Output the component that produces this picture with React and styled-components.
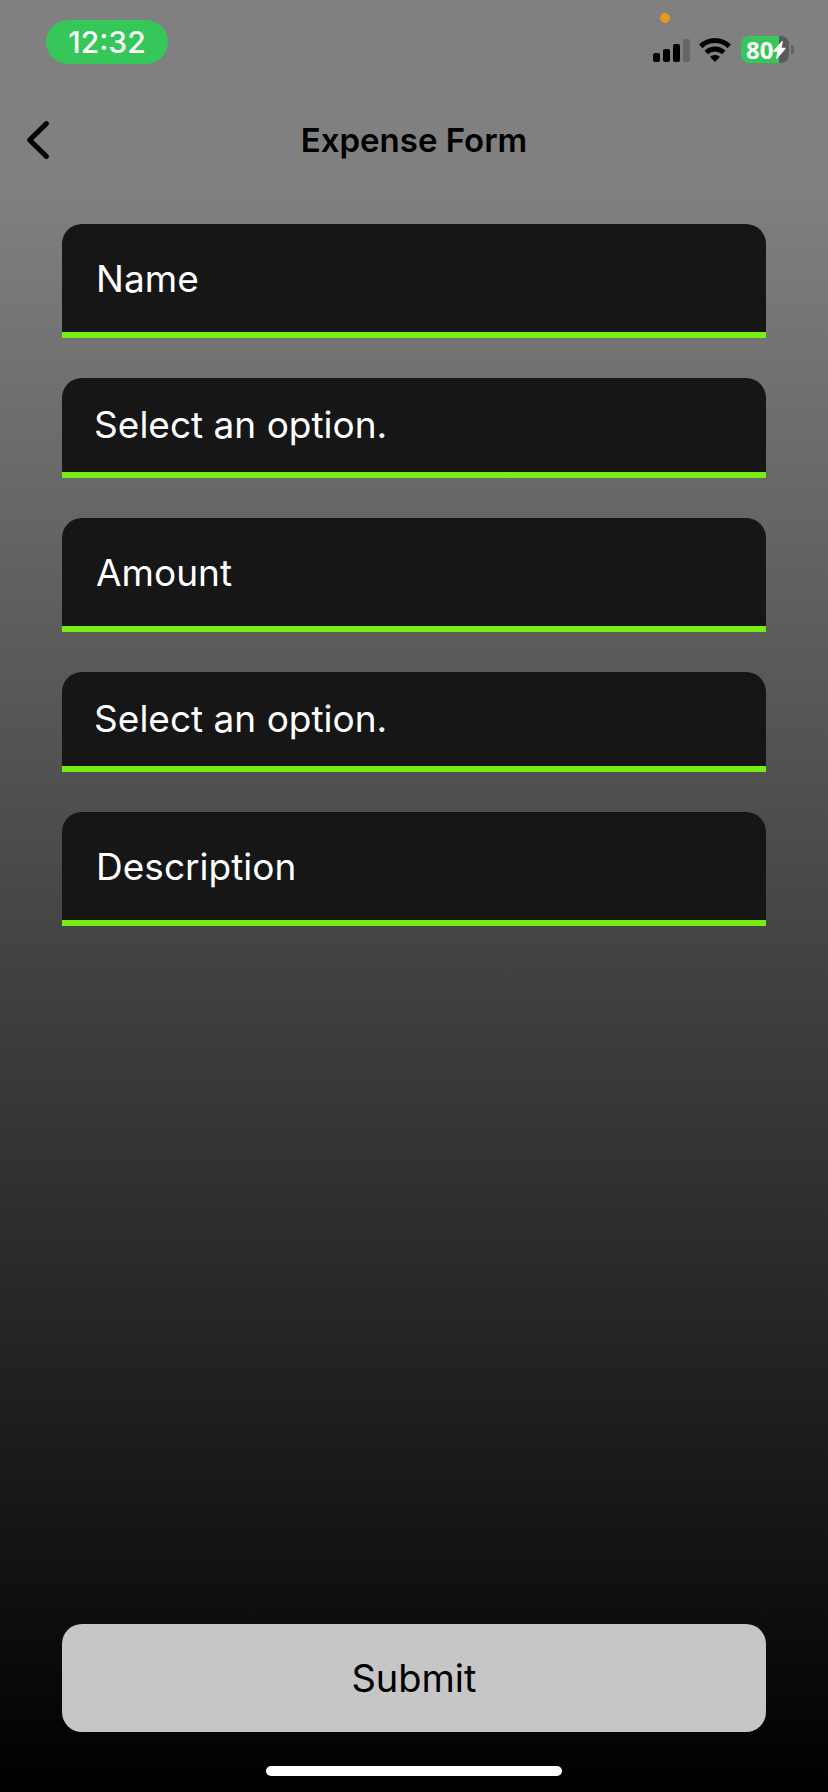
import React from "react";
import styled, { createGlobalStyle } from "styled-components";

const GlobalStyle = createGlobalStyle`
  *, *::before, *::after { box-sizing: border-box; }
  body {
    margin: 0;
    background: #000;
    font-family: Inter, "Liberation Sans", sans-serif;
  }
`;

const Screen = styled.div`
  display: flex;
  flex-direction: column;
  min-height: 100vh;
  background: linear-gradient(to bottom, #808080 184px, #000 100%);
`;

const StatusBar = styled.div`
  display: flex;
  justify-content: space-between;
  align-items: flex-start;
  height: 96px;
  padding: 20px 34px 0 46px;
`;

const TimePill = styled.time`
  display: flex;
  align-items: center;
  justify-content: center;
  width: 122px;
  height: 44px;
  border-radius: 22px;
  background: #35c759;
  color: #fff;
  font-size: 30px;
  font-weight: 500;
  line-height: 44px;
`;

const Indicators = styled.div`
  position: relative;
  display: flex;
  align-items: center;
  padding-top: 16px;
`;

const RecordingDot = styled.span`
  position: absolute;
  top: -7px;
  left: 7px;
  width: 10px;
  height: 10px;
  border-radius: 50%;
  background: #e6981f;
`;

const SignalIcon = styled.svg`
  width: 37px;
  height: 24px;
  margin-right: 9px;
`;

const WifiIcon = styled.svg`
  width: 32px;
  height: 24px;
  margin-right: 10px;
`;

const Battery = styled.div`
  display: flex;
  align-items: center;
  width: 48px;
  height: 27px;
  padding-left: 5px;
  border-radius: 8px;
  background: linear-gradient(to right, #35c759 38px, #5a5a5a 38px);
  color: #fff;
  font-family: "Noto Sans", sans-serif;
  font-size: 24px;
  font-weight: 700;
  line-height: 27px;
`;

const BoltIcon = styled.svg`
  flex: none;
  width: 13px;
  height: 18px;
`;

const BatteryCap = styled.span`
  width: 3px;
  height: 9px;
  margin-left: 2px;
  border-radius: 0 3px 3px 0;
  background: #626262;
`;

const Header = styled.header`
  display: grid;
  grid-template-columns: 80px 1fr 80px;
  align-items: center;
  height: 88px;
`;

const BackButton = styled.button`
  display: flex;
  align-items: center;
  height: 88px;
  padding: 0 0 0 26px;
  border: 0;
  background: none;
  cursor: pointer;
`;

const BackIcon = styled.svg`
  width: 24px;
  height: 40px;
`;

const Title = styled.h1`
  margin: 0;
  color: #000;
  font-size: 33px;
  font-weight: 600;
  line-height: 40px;
  text-align: center;
`;

const Form = styled.form`
  display: flex;
  flex: 1;
  flex-direction: column;
  gap: 40px;
  width: 85%;
  margin: 0 auto;
  padding: 40px 0 34px;
`;

const fieldStyles = `
  display: block;
  width: 100%;
  margin: 0;
  border: 0;
  border-bottom: 6px solid #76ee15;
  border-radius: 0;
  background: none;
  color: #fff;
  font-family: inherit;
  font-size: 37px;
  line-height: 48px;
  outline: none;
`;

const Field = styled.div`
  overflow: hidden;
  border-radius: 20px 20px 0 0;
  background: #161616;
`;

const TextInput = styled.input`
  ${fieldStyles}
  height: 114px;
  padding: 0 34px;

  &::placeholder {
    color: #fff;
    opacity: 1;
  }
`;

const SelectInput = styled.select`
  ${fieldStyles}
  height: 100px;
  padding: 0 32px;
  appearance: none;
`;

const SubmitButton = styled.button`
  height: 108px;
  margin-top: auto;
  border: 0;
  border-radius: 20px;
  background: #c6c6c6;
  color: #000;
  font-family: inherit;
  font-size: 38px;
  line-height: 48px;
  cursor: pointer;
`;

const HomeIndicator = styled.div`
  width: 296px;
  height: 10px;
  margin: 0 auto 16px;
  border-radius: 5px;
  background: #fff;
`;

const fields = [
  { id: "name", label: "Name", type: "text" },
  { id: "category", label: "Category", type: "select" },
  { id: "amount", label: "Amount", type: "text" },
  { id: "account", label: "Account", type: "select" },
  { id: "description", label: "Description", type: "text" },
];

function FormField({ id, label, type }) {
  return (
    <Field>
      {type === "select" ? (
        <SelectInput id={id} name={id} aria-label={label} defaultValue="">
          <option value="">Select an option.</option>
        </SelectInput>
      ) : (
        <TextInput id={id} name={id} type="text" aria-label={label} placeholder={label} />
      )}
    </Field>
  );
}

export default function App() {
  return (
    <>
      <GlobalStyle />
      <Screen>
        <StatusBar>
          <TimePill>12:32</TimePill>
          <Indicators>
            <RecordingDot />
            <SignalIcon viewBox="0 0 37 24" aria-hidden="true">
              <rect x="0" y="15" width="7" height="9" rx="2" />
              <rect x="10" y="11" width="7" height="13" rx="2" />
              <rect x="20" y="6" width="7" height="18" rx="2" />
              <rect x="30" y="1" width="7" height="23" rx="2" fill="#666" />
            </SignalIcon>
            <WifiIcon viewBox="0 0 32 24" aria-hidden="true">
              <g fill="none" stroke="#000" strokeWidth="5">
                <path d="M1.8 8.4A20.2 20.2 0 0 1 30.2 8.4" />
                <path d="M7.2 14.6A12.4 12.4 0 0 1 24.8 14.6" />
              </g>
              <path d="M16 24L11.3 19.3Q11.3 18.3 12.2 17.9Q16 15.9 19.8 17.9Q20.7 18.3 20.7 19.3Z" />
            </WifiIcon>
            <Battery>
              80
              <BoltIcon viewBox="0 0 13 18" aria-hidden="true">
                <path
                  d="M9.3 0.6L0.8 10.2H5.2L3.6 17.4L12.2 7.4H7.8Z"
                  fill="#fff"
                  stroke="#fff"
                  strokeWidth="1.1"
                  strokeLinejoin="round"
                />
              </BoltIcon>
            </Battery>
            <BatteryCap />
          </Indicators>
        </StatusBar>
        <Header>
          <BackButton type="button" aria-label="Back">
            <BackIcon viewBox="0 0 24 40" aria-hidden="true">
              <path
                d="M20.4 3.6L3.6 20L20.4 36.4"
                fill="none"
                stroke="#000"
                strokeWidth="5"
                strokeLinecap="round"
                strokeLinejoin="round"
              />
            </BackIcon>
          </BackButton>
          <Title>Expense Form</Title>
        </Header>
        <Form onSubmit={(event) => event.preventDefault()}>
          {fields.map((field) => (
            <FormField key={field.id} {...field} />
          ))}
          <SubmitButton type="submit">Submit</SubmitButton>
        </Form>
        <HomeIndicator />
      </Screen>
    </>
  );
}
